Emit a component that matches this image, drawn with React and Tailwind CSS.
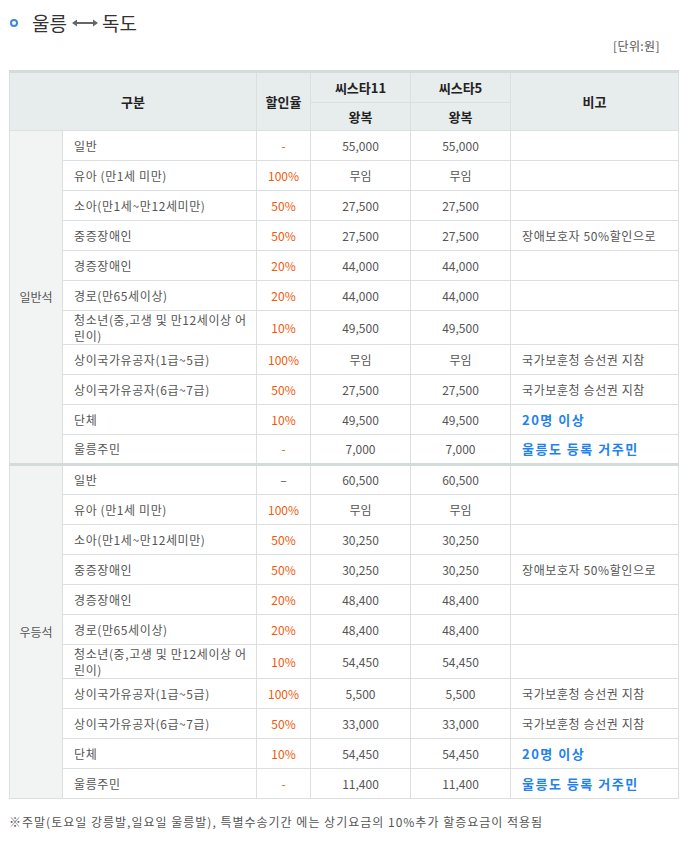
const rows = [
  ['일반', '-', '55,000', '55,000', ''],
  ['유아 (만1세 미만)', '100%', '무임', '무임', ''],
  ['소아(만1세~만12세미만)', '50%', '27,500', '27,500', ''],
  ['중증장애인', '50%', '27,500', '27,500', '장애보호자 50%할인으로'],
  ['경증장애인', '20%', '44,000', '44,000', ''],
  ['경로(만65세이상)', '20%', '44,000', '44,000', ''],
  ['청소년(중,고생 및 만12세이상 어린이)', '10%', '49,500', '49,500', ''],
  ['상이국가유공자(1급~5급)', '100%', '무임', '무임', '국가보훈청 승선권 지참'],
  ['상이국가유공자(6급~7급)', '50%', '27,500', '27,500', '국가보훈청 승선권 지참'],
  ['단체', '10%', '49,500', '49,500', '20명 이상'],
  ['울릉주민', '-', '7,000', '7,000', '울릉도 등록 거주민'],
]

// 우등석 첫 줄의 '-'는 회색으로 표시됨
const rows2 = [
  ['일반', '–', '60,500', '60,500', '', true],
  ['유아 (만1세 미만)', '100%', '무임', '무임', ''],
  ['소아(만1세~만12세미만)', '50%', '30,250', '30,250', ''],
  ['중증장애인', '50%', '30,250', '30,250', '장애보호자 50%할인으로'],
  ['경증장애인', '20%', '48,400', '48,400', ''],
  ['경로(만65세이상)', '20%', '48,400', '48,400', ''],
  ['청소년(중,고생 및 만12세이상 어린이)', '10%', '54,450', '54,450', ''],
  ['상이국가유공자(1급~5급)', '100%', '5,500', '5,500', '국가보훈청 승선권 지참'],
  ['상이국가유공자(6급~7급)', '50%', '33,000', '33,000', '국가보훈청 승선권 지참'],
  ['단체', '10%', '54,450', '54,450', '20명 이상'],
  ['울릉주민', '-', '11,400', '11,400', '울릉도 등록 거주민'],
]

const blueNotes = ['20명 이상', '울릉도 등록 거주민']

function Group({ label, data, last }) {
  return data.map((r, i) => {
    const tall = r[0].startsWith('청소년')
    const sep = i === data.length - 1 && !last
    const rowCls = sep ? 'border-b-[3px] border-b-[#d3dcda]' : ''
    return (
      <tr key={i} className={rowCls}>
        {i === 0 && (
          <td rowSpan={data.length} className="border border-[#dcdfdf] bg-[#f2f4f4] text-center text-[#555]">
            {label}
          </td>
        )}
        <td className={`border border-[#dcdfdf] pl-[11px] pr-1 leading-[16px] tracking-[0.6px] text-[#555] ${tall ? 'h-[34px]' : 'h-[30px]'}`}>
          {r[0]}
        </td>
        <td className={`border border-[#dcdfdf] text-center ${r[5] ? 'text-[#555]' : 'text-[#f05a0a]'}`}>{r[1]}</td>
        <td className="border border-[#dcdfdf] text-center text-[#555]">{r[2]}</td>
        <td className="border border-[#dcdfdf] text-center text-[#555]">{r[3]}</td>
        <td
          className={`border border-[#dcdfdf] pl-[11px] ${
            blueNotes.includes(r[4])
              ? 'text-[13px] font-bold tracking-[1.5px] text-[#1e82f0]'
              : 'tracking-[0.6px] text-[#555]'
          }`}
        >
          {r[4]}
        </td>
      </tr>
    )
  })
}

export default function App() {
  return (
    <div className="w-[688px] bg-white font-['Noto_Sans_CJK_KR','Liberation_Sans',sans-serif] text-[12px]">
      {/* 제목 */}
      <div className="flex items-center pl-[10px] pt-[10px]">
        <span className="mr-[14px] inline-block h-[8px] w-[8px] rounded-full border-[2px] border-[#3c86dc] bg-white" />
        <span className="text-[19px] leading-[26px] text-[#333]">울릉</span>
        <svg width="28" height="10" viewBox="0 0 28 10" className="ml-[4px] mr-[3px]">
          <path d="M4 5 H24" stroke="#666" strokeWidth="2" />
          <path d="M1 5 L6 1.5 L6 8.5 Z M27 5 L22 1.5 L22 8.5 Z" fill="#666" />
        </svg>
        <span className="text-[19px] leading-[26px] text-[#333]">독도</span>
      </div>

      <div className="mt-[2px] pr-[28px] text-right text-[12px] leading-[16px] tracking-[0.4px] text-[#555]">[단위:원]</div>

      <div className="mt-[16px] pl-[9px]">
        <table className="w-[669px] table-fixed border-collapse border-t-[3px] border-t-[#d3dcda]">
          <colgroup>
            <col className="w-[53px]" />
            <col className="w-[194px]" />
            <col className="w-[54px]" />
            <col className="w-[100px]" />
            <col className="w-[100px]" />
            <col className="w-[168px]" />
          </colgroup>
          <thead>
            <tr className="h-[31px] bg-[#e7ecec] text-[13px] font-bold text-[#222]">
              <th colSpan={2} rowSpan={2} className="border border-[#dcdfdf]">구분</th>
              <th rowSpan={2} className="border border-[#dcdfdf]">할인율</th>
              <th className="border border-[#dcdfdf]">씨스타11</th>
              <th className="border border-[#dcdfdf]">씨스타5</th>
              <th rowSpan={2} className="border border-[#dcdfdf]">비고</th>
            </tr>
            <tr className="h-[28px] bg-[#e7ecec] text-[13px] font-bold text-[#222]">
              <th className="border border-[#dcdfdf]">왕복</th>
              <th className="border border-[#dcdfdf]">왕복</th>
            </tr>
          </thead>
          <tbody>
            <Group label="일반석" data={rows} />
            <Group label="우등석" data={rows2} last />
          </tbody>
        </table>
      </div>

      <p className="mt-[14px] pb-[20px] pl-[9px] text-[12px] tracking-[1px] text-[#555]">
        ※주말(토요일 강릉발,일요일 울릉발), 특별수송기간 에는 상기요금의 10%추가 할증요금이 적용됨
      </p>
    </div>
  )
}
